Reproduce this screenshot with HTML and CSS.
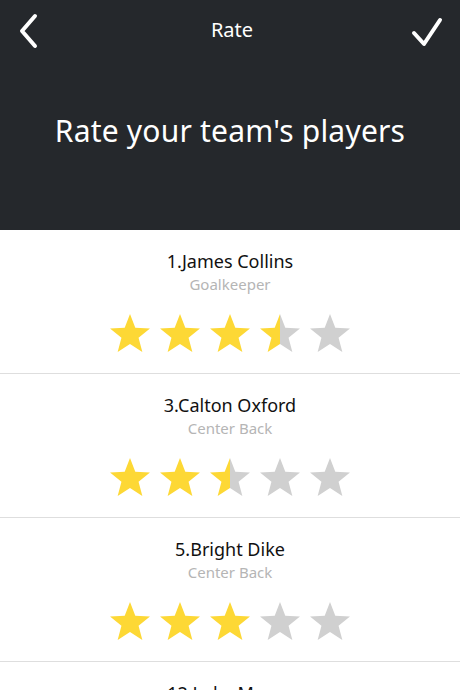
FILE: index.html
```html
<!DOCTYPE html>
<html>
<head>
<meta charset="utf-8">
<link rel="stylesheet" href="styles.css">
</head>
<body>
<svg class="defs" width="0" height="0">
  <defs>
    <linearGradient id="half" x1="0" y1="0" x2="1" y2="0">
      <stop offset="0.5" stop-color="#fdd835"/>
      <stop offset="0.5" stop-color="#d0d0d0"/>
    </linearGradient>
    <polygon id="star" points="20,0 25.29,13.72 39.97,14.51 28.56,23.78 32.34,37.99 20,30 7.66,37.99 11.44,23.78 0.03,14.51 14.71,13.72"/>
  </defs>
</svg>
<header class="top">
  <nav class="nav">
    <svg class="icon back" width="40" height="60" viewBox="0 0 40 60"><polyline points="35,16 22,31 35,46" fill="none" stroke="#fff" stroke-width="4" stroke-linecap="round" stroke-linejoin="round"/></svg>
    <div class="nav-title">Rate</div>
    <svg class="icon ok" width="40" height="60" viewBox="0 0 40 60"><polyline points="6,33 16,44 32,20" fill="none" stroke="#fff" stroke-width="4" stroke-linecap="round" stroke-linejoin="round"/></svg>
  </nav>
  <h1 class="headline">Rate your team's players</h1>
</header>
<main class="list">
  <section class="row">
    <div class="name">1.James Collins</div>
    <div class="pos">Goalkeeper</div>
    <div class="stars">
      <svg class="star on" viewBox="0 0 40 40"><use href="#star"/></svg>
      <svg class="star on" viewBox="0 0 40 40"><use href="#star"/></svg>
      <svg class="star on" viewBox="0 0 40 40"><use href="#star"/></svg>
      <svg class="star half" viewBox="0 0 40 40"><use href="#star"/></svg>
      <svg class="star off" viewBox="0 0 40 40"><use href="#star"/></svg>
    </div>
  </section>
  <section class="row">
    <div class="name">3.Calton Oxford</div>
    <div class="pos">Center Back</div>
    <div class="stars">
      <svg class="star on" viewBox="0 0 40 40"><use href="#star"/></svg>
      <svg class="star on" viewBox="0 0 40 40"><use href="#star"/></svg>
      <svg class="star half" viewBox="0 0 40 40"><use href="#star"/></svg>
      <svg class="star off" viewBox="0 0 40 40"><use href="#star"/></svg>
      <svg class="star off" viewBox="0 0 40 40"><use href="#star"/></svg>
    </div>
  </section>
  <section class="row">
    <div class="name">5.Bright Dike</div>
    <div class="pos">Center Back</div>
    <div class="stars">
      <svg class="star on" viewBox="0 0 40 40"><use href="#star"/></svg>
      <svg class="star on" viewBox="0 0 40 40"><use href="#star"/></svg>
      <svg class="star on" viewBox="0 0 40 40"><use href="#star"/></svg>
      <svg class="star off" viewBox="0 0 40 40"><use href="#star"/></svg>
      <svg class="star off" viewBox="0 0 40 40"><use href="#star"/></svg>
    </div>
  </section>
  <section class="row">
    <div class="name">12.Luke Moore</div>
  </section>
</main>
</body>
</html>
```
FILE: styles.css
```css
* { box-sizing: border-box; }
html, body { margin: 0; padding: 0; }
body {
  width: 460px;
  height: 690px;
  overflow: hidden;
  background: #fff;
  font-family: "Noto Sans", "Open Sans", sans-serif;
}
.defs { position: absolute; }
.top {
  height: 230px;
  background: #25282c;
  color: #fff;
}
.nav {
  height: 60px;
  display: grid;
  grid-template-columns: 60px 1fr 60px;
  align-items: center;
}
.icon { display: block; }
.icon.ok { justify-self: end; margin-right: 12px; }
.nav-title {
  text-align: center;
  font-size: 20px;
  line-height: 60px;
  font-weight: 400;
  padding-left: 4px;
}
.headline {
  margin: 0;
  padding-top: 49px;
  text-align: center;
  font-size: 30px;
  line-height: 44px;
  font-weight: 400;
  letter-spacing: 0.2px;
}
.list { display: flex; flex-direction: column; }
.row {
  padding: 20px 0 19px;
  border-bottom: 1px solid #dedede;
  display: flex;
  flex-direction: column;
  align-items: center;
}
.name {
  font-size: 18px;
  line-height: 22px;
  color: #111;
}
.pos {
  margin-top: 2px;
  font-size: 15px;
  line-height: 20px;
  color: #b5b5b5;
}
.stars {
  margin-top: 20px;
  display: flex;
  gap: 10px;
}
.star { width: 40px; height: 40px; display: block; }
.star.on { fill: #fdd835; }
.star.off { fill: #d0d0d0; }
.star.half { fill: url(#half); }
```
